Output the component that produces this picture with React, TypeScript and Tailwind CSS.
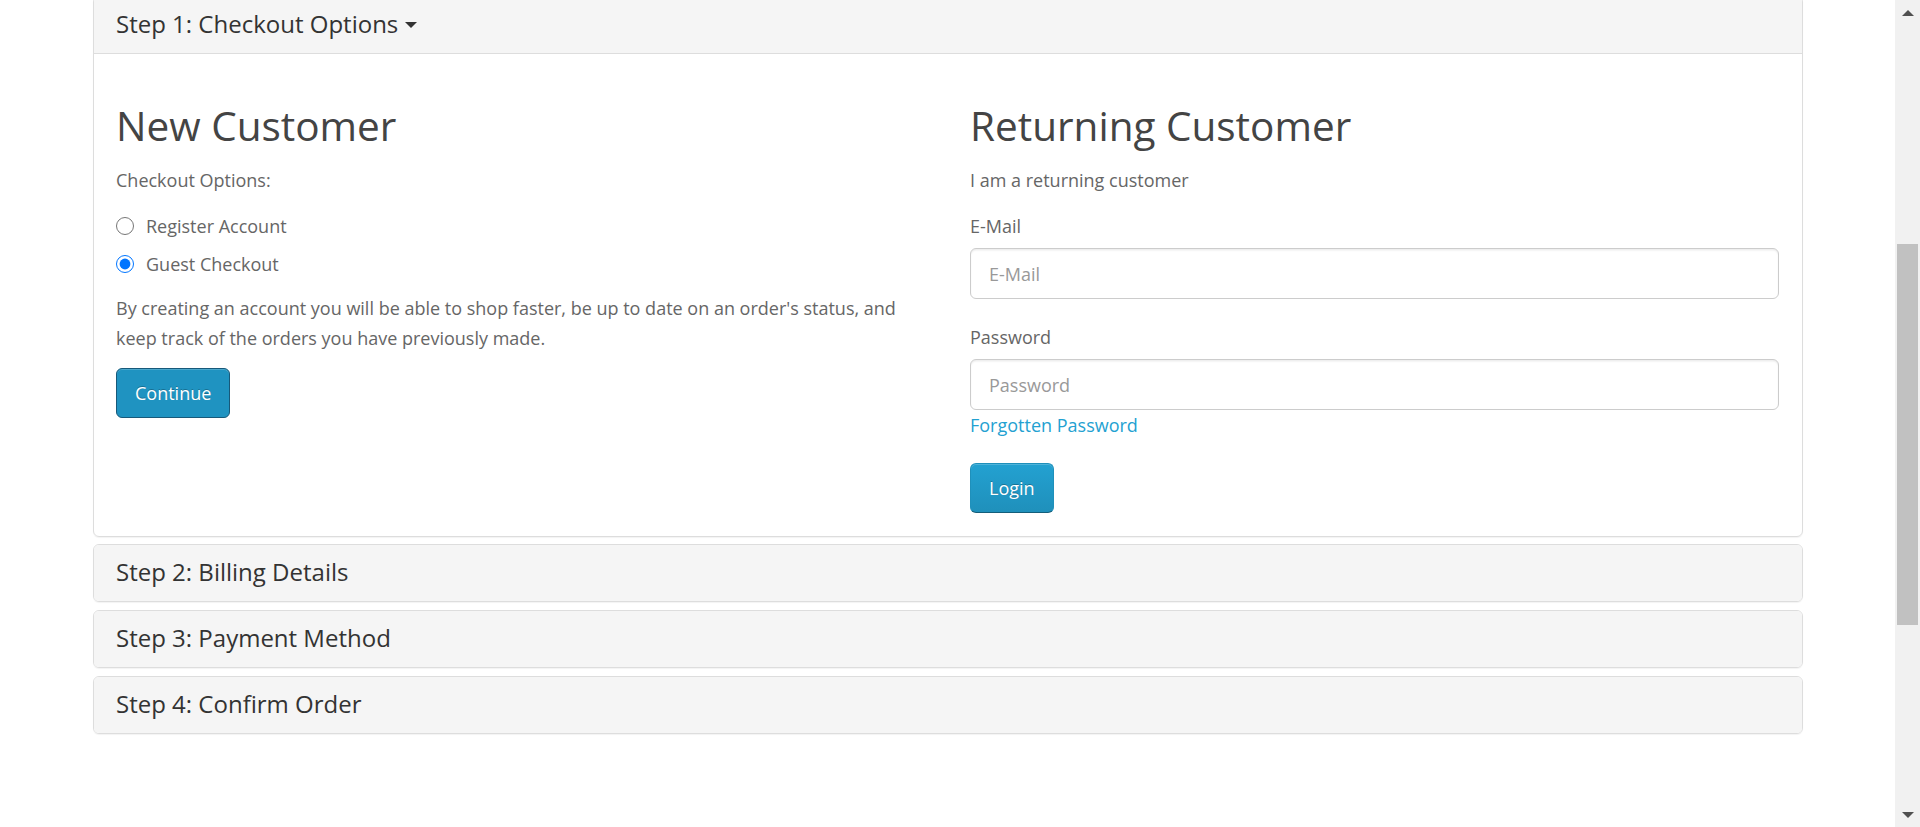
// Checkout accordion (step 1 open), drawn at the 1.5x scale of the reference.

const font = "font-['Open_Sans',sans-serif]";

function StepHeading({ title, open }: { title: string; open?: boolean }) {
  return (
    <div
      className={
        "flex items-center bg-[#f5f5f5] px-[22px] pt-[14px] pb-[16px] text-[24px] leading-[26px] text-[#333] " +
        (open ? "border-b border-[#ddd]" : "")
      }
    >
      <span>{title}</span>
      {open && (
        <span className="ml-[7px] mt-[2px] inline-block h-0 w-0 border-x-[6px] border-t-[6px] border-x-transparent border-t-[#333]" />
      )}
    </div>
  );
}

function Radio({ label, checked }: { label: string; checked?: boolean }) {
  return (
    <label className="flex h-[30px] items-center gap-[12px]">
      <input type="radio" name="account" defaultChecked={checked} className="m-0 h-[18px] w-[18px]" />
      <span>{label}</span>
    </label>
  );
}

function Field({ label, type, first }: { label: string; type: string; first?: boolean }) {
  return (
    <div className={first ? "mt-[16px]" : "mt-[23px]"}>
      <div className="leading-[30px]">{label}</div>
      <input
        type={type}
        placeholder={label}
        className="mt-[7px] h-[51px] w-full rounded-[6px] border border-[#ccc] bg-white px-[18px] text-[18px] text-[#555] shadow-[inset_0_1.5px_1.5px_rgba(0,0,0,0.075)] outline-none placeholder:text-[#999]"
      />
    </div>
  );
}

export default function App() {
  return (
    <div className={"flex h-[827px] w-full overflow-hidden bg-white text-[18px] leading-[30px] text-[#666] " + font}>
      <main className="flex-1">
        <div className="-mt-[4px] ml-[93px] w-[1710px]">
          {/* step 1, open */}
          <div className="overflow-hidden rounded-[6px] border border-[#ddd] shadow-[0_1px_1px_rgba(0,0,0,0.05)]">
            <StepHeading title="Step 1: Checkout Options" open />
            <div className="grid grid-cols-2 gap-x-[45px] pl-[22px] pr-[23px] pt-[22px] pb-[23px]">
              <div>
                <h2 className="mt-[28px] text-[40.5px] leading-[44px] font-normal text-[#444]">New Customer</h2>
                <p className="mt-[17px]">Checkout Options:</p>
                <div className="mt-[16px]">
                  <Radio label="Register Account" />
                </div>
                <div className="mt-[8px]">
                  <Radio label="Guest Checkout" checked />
                </div>
                <p className="mt-[14px]">
                  By creating an account you will be able to shop faster, be up to date on an order's status, and
                  keep track of the orders you have previously made.
                </p>
                <button
                  type="button"
                  className="mt-[15px] h-[50px] rounded-[6px] border border-[#17597a] bg-[#1f93c1] px-[18px] text-white shadow-[inset_0_1px_0_rgba(255,255,255,0.2)] [text-shadow:0_-1px_0_rgba(0,0,0,0.25)]"
                >
                  Continue
                </button>
              </div>
              <div>
                <h2 className="mt-[28px] text-[40.5px] leading-[44px] font-normal text-[#444]">Returning Customer</h2>
                <p className="mt-[17px]">I am a returning customer</p>
                <Field label="E-Mail" type="text" first />
                <Field label="Password" type="password" />
                <a href="#" className="block leading-[30px] text-[#23a1d1]">
                  Forgotten Password
                </a>
                <button
                  type="button"
                  className="mt-[23px] h-[50px] rounded-[6px] border border-[#1f90bb] border-b-[#145e7a] bg-gradient-to-b from-[#23a1d1] to-[#1f90bb] px-[18px] text-white shadow-[inset_0_1px_0_rgba(255,255,255,0.2)] [text-shadow:0_-1px_0_rgba(0,0,0,0.25)]"
                >
                  Login
                </button>
              </div>
            </div>
          </div>

          {["Step 2: Billing Details", "Step 3: Payment Method", "Step 4: Confirm Order"].map((t, i) => (
            <div
              key={t}
              className={
                "overflow-hidden rounded-[6px] border border-[#ddd] shadow-[0_1px_1px_rgba(0,0,0,0.05)] " +
                (i === 0 ? "mt-[7px]" : "mt-[8px]")
              }
            >
              <StepHeading title={t} />
            </div>
          ))}
        </div>
      </main>

      {/* browser scrollbar */}
      <div className="flex w-[25px] shrink-0 flex-col bg-[#f1f1f1]">
        <div className="flex h-[25px] items-center justify-center">
          <span className="h-0 w-0 border-x-[6px] border-b-[6px] border-x-transparent border-b-[#505050]" />
        </div>
        <div className="h-[219px]" />
        <div className="mx-[2px] h-[381px] bg-[#c1c1c1]" />
        <div className="flex-1" />
        <div className="flex h-[25px] items-center justify-center">
          <span className="h-0 w-0 border-x-[6px] border-t-[6px] border-x-transparent border-t-[#505050]" />
        </div>
      </div>
    </div>
  );
}
